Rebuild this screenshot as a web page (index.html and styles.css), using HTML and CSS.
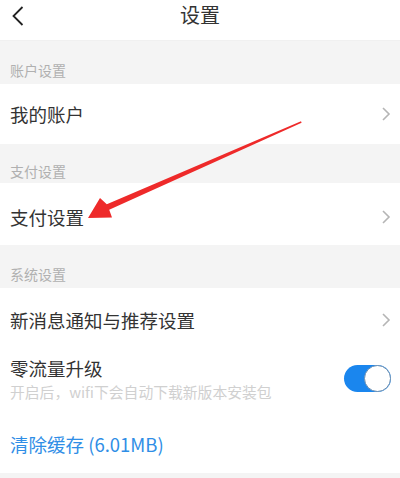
FILE: index.html
```html
<!DOCTYPE html>
<html lang="zh-CN">
<head>
<meta charset="utf-8">
<title>设置</title>
<link rel="stylesheet" href="styles.css">
</head>
<body>
<div class="page">
  <header class="header">
    <svg class="back" width="14" height="22" viewBox="0 0 14 22"><path d="M11.5 2 L2.5 11 L11.5 20" fill="none" stroke="#222" stroke-width="1.8"/></svg>
    <h1 class="title">设置</h1>
  </header>

  <div class="section-label s1">账户设置</div>
  <div class="row r1">
    <span class="row-text">我的账户</span>
    <svg class="chev" width="10" height="16" viewBox="0 0 10 16"><path d="M2 2 L8 8 L2 14" fill="none" stroke="#b5b5b5" stroke-width="1.6"/></svg>
  </div>

  <div class="section-label s2">支付设置</div>
  <div class="row r2">
    <span class="row-text">支付设置</span>
    <svg class="chev" width="10" height="16" viewBox="0 0 10 16"><path d="M2 2 L8 8 L2 14" fill="none" stroke="#b5b5b5" stroke-width="1.6"/></svg>
  </div>

  <div class="section-label s3">系统设置</div>
  <div class="row r3">
    <span class="row-text">新消息通知与推荐设置</span>
    <svg class="chev" width="10" height="16" viewBox="0 0 10 16"><path d="M2 2 L8 8 L2 14" fill="none" stroke="#b5b5b5" stroke-width="1.6"/></svg>
  </div>
  <div class="row r4">
    <div class="col">
      <span class="row-text">零流量升级</span>
      <span class="sub">开启后，wifi下会自动下载新版本安装包</span>
    </div>
    <div class="toggle"><div class="knob"></div></div>
  </div>
  <div class="row r5">
    <span class="row-text blue">清除缓存 (6.01MB)</span>
  </div>
  <div class="footer"></div>

  <svg class="arrow" width="400" height="478" viewBox="0 0 400 478">
    <polygon points="88,218 100,198 106.8,204.3 301,121.3 301.6,122.8 109.2,209.7 112,217.5" fill="#ee2a2a"/>
  </svg>
</div>
</body>
</html>
```

FILE: styles.css
```css
* { box-sizing: border-box; margin: 0; padding: 0; }
html, body { background: #fff; }
body {
  width: 400px;
  height: 478px;
  overflow: hidden;
  font-family: "Noto Sans CJK SC", "Noto Sans", sans-serif;
  color: #333;
}
.page { position: relative; width: 400px; height: 478px; }
.header {
  height: 40px;
  display: flex;
  align-items: flex-start;
  justify-content: center;
  position: relative;
}
.back { position: absolute; left: 11px; top: 5px; }
.title {
  font-size: 20px;
  font-weight: 400;
  line-height: 30px;
  color: #333;
}
.section-label {
  background: #f4f4f4;
  font-size: 14px;
  color: #b0b0b0;
  line-height: 18px;
  padding-left: 10px;
  display: flex;
  align-items: flex-end;
}
.s1 { height: 44px; padding-bottom: 5px; border-top: 1px solid #f0f0f0; }
.s2 { height: 39px; padding-bottom: 3px; }
.s3 { height: 43px; padding-bottom: 5px; }
.row {
  display: flex;
  align-items: center;
  justify-content: space-between;
  padding: 0 9px 0 10px;
  background: #fff;
}
.r1 { height: 60px; }
.r2 { height: 62px; padding-top: 6px; }
.r3 { height: 62px; padding-top: 2px; }
.r4 { height: 65px; padding-bottom: 8px; }
.r5 { height: 58px; padding-top: 0px; }
.row-text { font-size: 18.5px; line-height: 24px; color: #333; }
.row-text.blue { color: #2f8ee6; }
.col { display: flex; flex-direction: column; }
.sub { font-size: 14.8px; line-height: 19px; color: #d0d0d0; margin-top: 2px; }
.chev { margin-right: 0; }
.toggle {
  width: 47px;
  height: 27px;
  border-radius: 14px;
  background: #1a86ee;
  position: relative;
  margin-right: 0;
}
.knob {
  position: absolute;
  right: 0;
  top: 0;
  width: 27px;
  height: 27px;
  border-radius: 50%;
  background: #fff;
  border: 1.5px solid #6d8fb0;
}
.footer { height: 5px; background: #f4f4f4; }
.arrow { position: absolute; left: 0; top: 0; pointer-events: none; }
```
